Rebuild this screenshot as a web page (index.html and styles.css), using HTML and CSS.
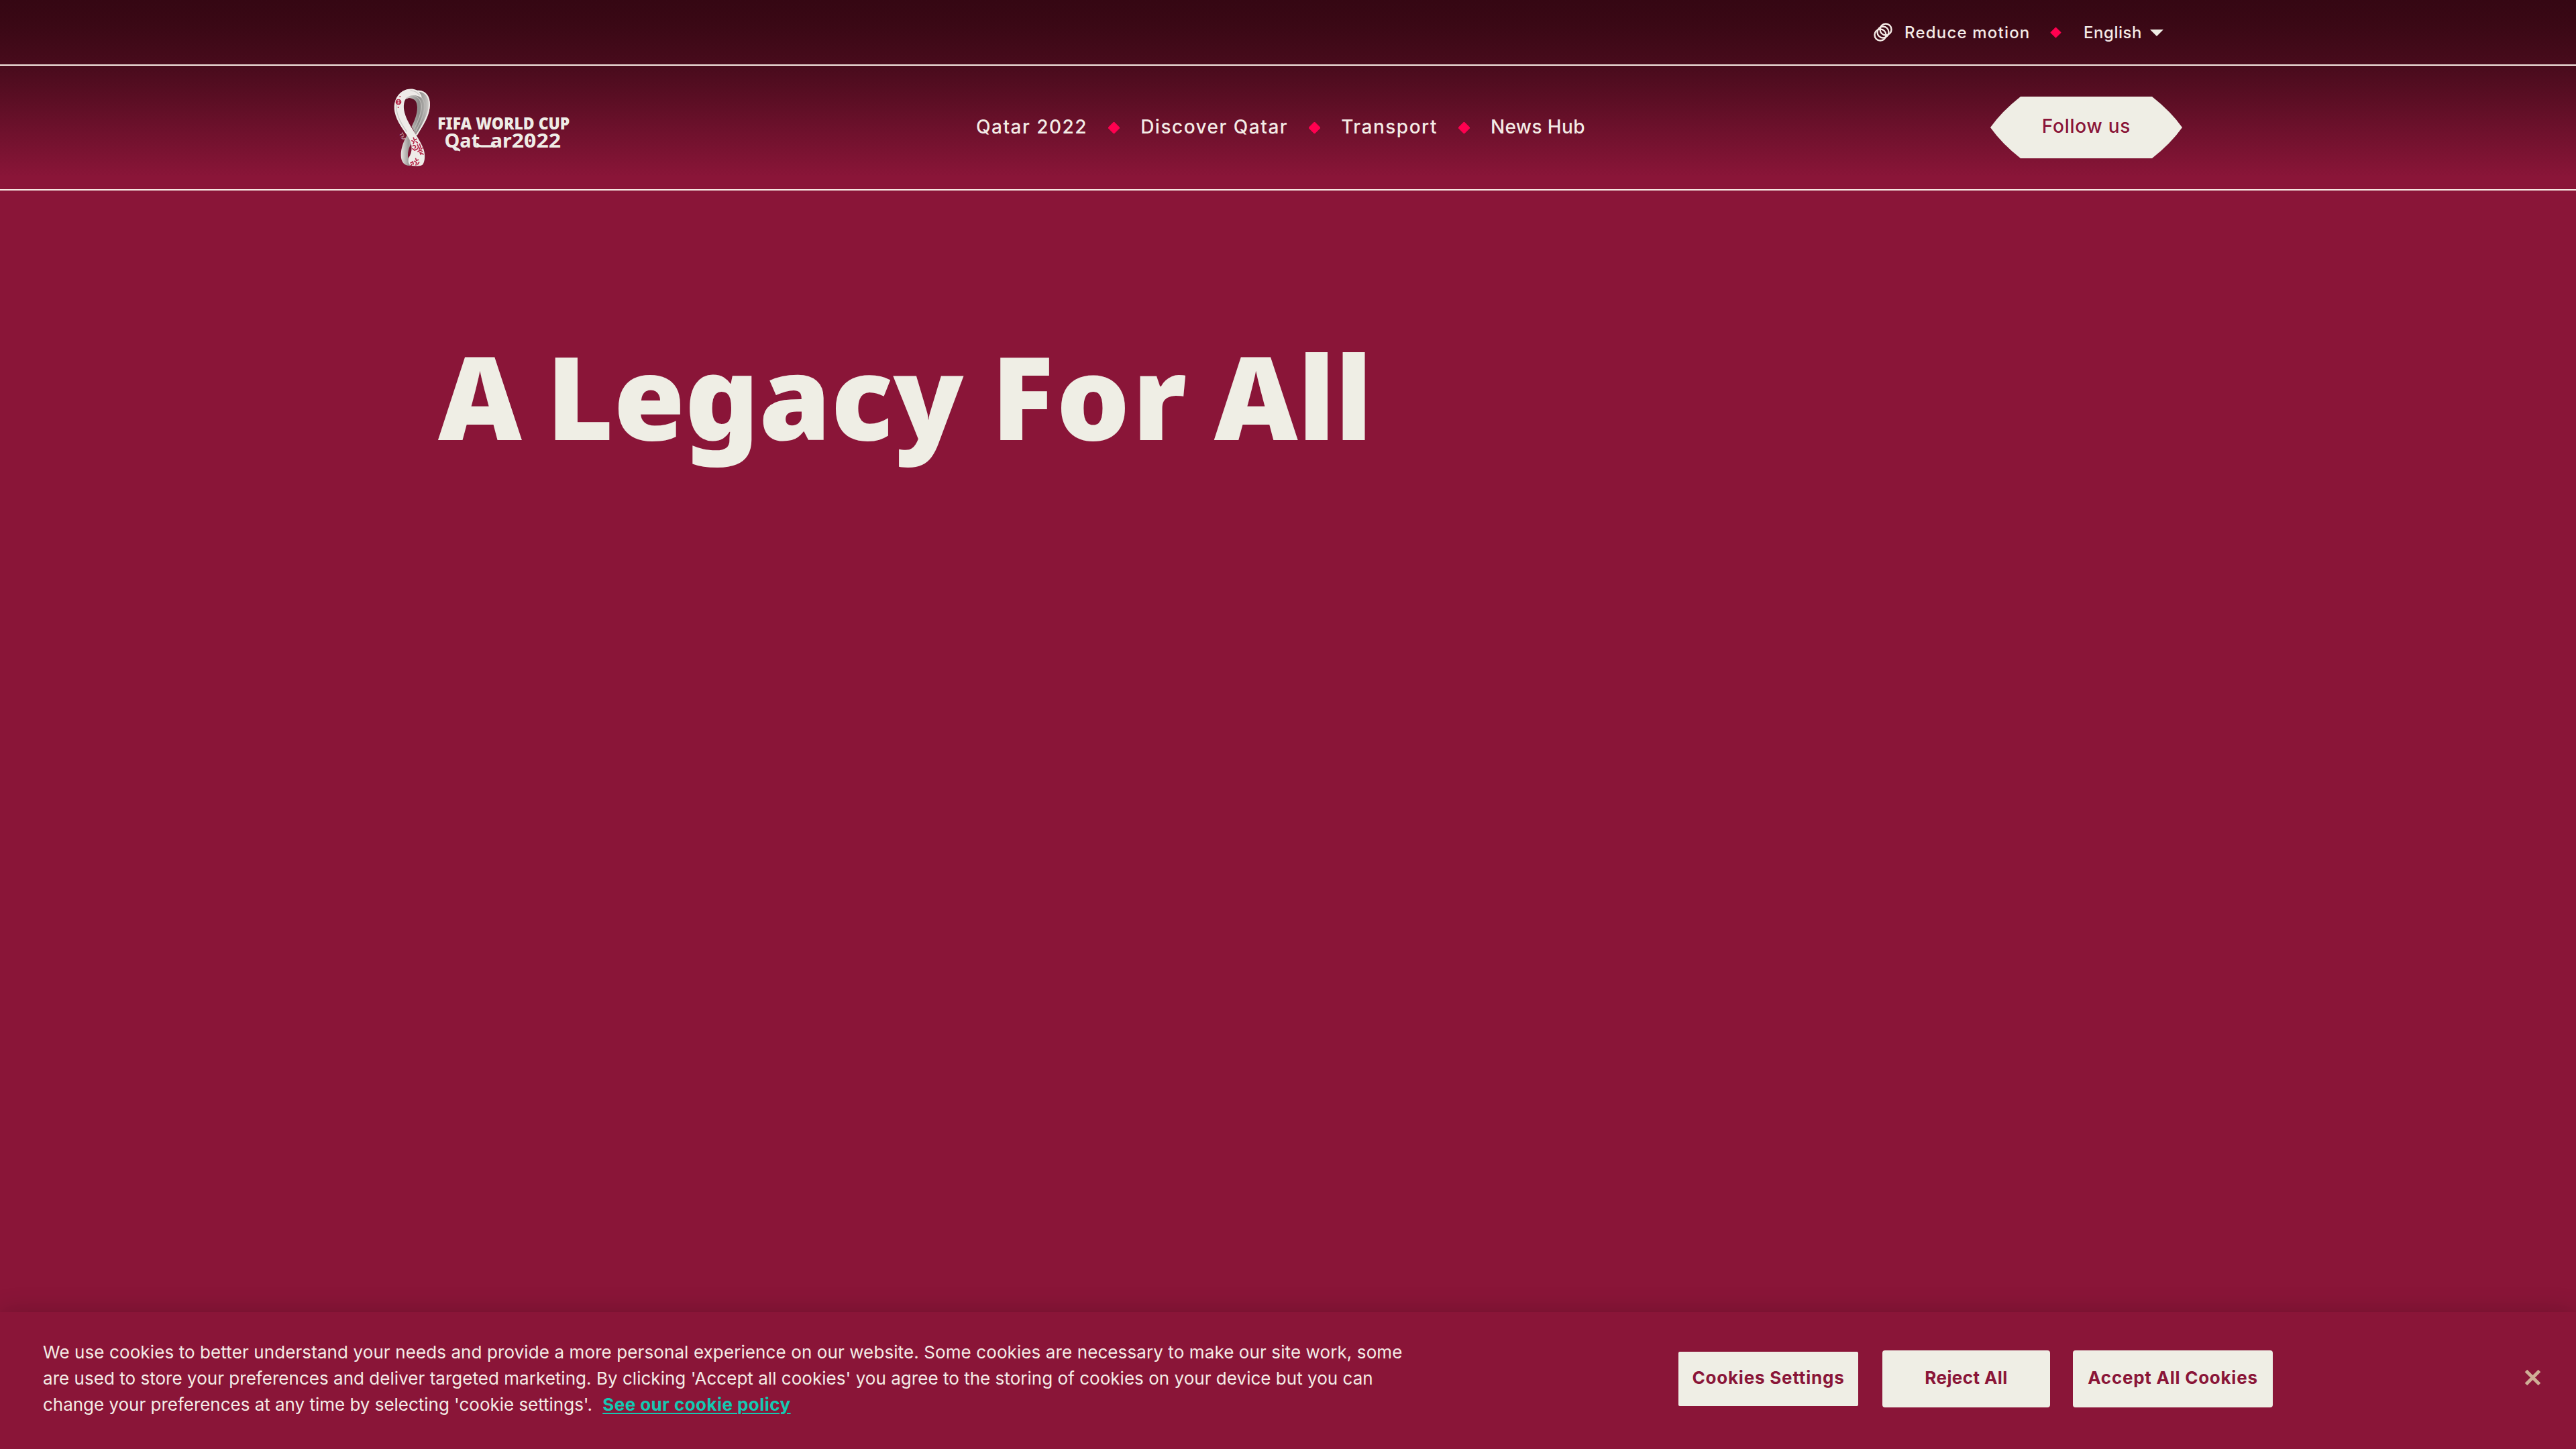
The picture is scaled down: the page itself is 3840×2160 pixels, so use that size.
FILE: index.html
```html
<!DOCTYPE html>
<html lang="en">
<head>
<meta charset="utf-8">
<title>A Legacy For All</title>
<link rel="stylesheet" href="styles.css">
</head>
<body>
<header class="header">
  <div class="topbar">
    <svg class="motion-icon" viewBox="0 0 27 27" fill="none" stroke="currentColor" stroke-width="2.3">
      <circle cx="9.6" cy="17.4" r="8.2"/><circle cx="13.5" cy="13.5" r="8.2"/><circle cx="17.4" cy="9.6" r="8.2"/>
    </svg>
    <span class="reduce">Reduce motion</span>
    <svg class="diamond" viewBox="0 0 16 16"><path d="M8 1L15 8L8 15L1 8Z"/></svg>
    <span class="language">English</span>
    <svg class="caret" viewBox="0 0 20 10"><path d="M0 0H20L10 10Z"/></svg>
  </div>
  <div class="mainbar">
    <a class="logo">
      <svg viewBox="40 60 820 360">
        <defs>
          <linearGradient id="inner" x1="0" x2="1" y1="0" y2="0"><stop offset="0" stop-color="#d8d6d2"/><stop offset=".55" stop-color="#8b8a88"/><stop offset="1" stop-color="#d3d1ce"/></linearGradient>
          <linearGradient id="lower" x1="0" x2="1" y1="0" y2="0"><stop offset="0" stop-color="#e8e5e1"/><stop offset=".6" stop-color="#9b9997"/><stop offset="1" stop-color="#d8d5d2"/></linearGradient>
        </defs>
        <path fill="url(#inner)" d="M128 82C155 64 190 72 206 102C220 132 213 175 196 208C181 238 165 259 154 278L132 236C144 212 158 180 157 149C156 124 147 111 120 108L105 114Z"/>
        <path fill="none" stroke="#bbb9b6" stroke-width="4" d="M128 97C160 96 178 120 176 152C174 187 157 219 143 247M142 90C176 93 192 120 190 151C188 186 167 226 151 256"/>
        <path fill="none" stroke="#f0ece9" stroke-width="6" d="M160 78C194 76 213 103 211 141C209 187 176 237 154 274"/>
        <path fill="url(#lower)" d="M112 274C97 298 83 335 84 366C85 394 98 411 124 411L142 401L116 374C113 358 118 330 132 309Z"/>
        <path fill="#eeebe8" d="M170 88C158 65 120 61 91 78C60 98 49 135 56 170C65 215 96 251 117 284C138 317 135 350 120 374C114 391 118 409 132 411C151 413 174 414 182 406C193 389 193 359 185 336C172 300 135 250 119 219C103 189 93 159 98 132C102 108 119 96 140 96C155 96 165 101 176 107C178 100 175 94 170 88Z"/>
        <path fill="none" stroke="#cbc8c5" stroke-width="4" d="M126 76C145 74 155 82 168 96M64 130C58 178 83 220 111 260"/>
        <g fill="#b51f40">
          <circle cx="73" cy="126" r="13"/><circle cx="80" cy="102" r="3"/><circle cx="72" cy="150" r="3"/>
        </g>
        <path fill="none" stroke="#eeebe8" stroke-width="2.500" d="M66 122L74 118L80 124M67 132L74 127L80 132M73 116V136"/>
        <g fill="none" stroke="#b8274a" stroke-width="5" stroke-linecap="round">
          <path d="M140 286L144 297L154 292M133 299L143 304L139 313M151 303L158 309M137 323C148 316 154 328 146 333M136 335L145 342L154 338M158 318L163 328L156 338M167 314L172 326L166 337M160 348L170 342L180 347M174 337L179 332M174 354L184 360M169 352L173 361M150 379L153 388L162 385M145 391L154 397L151 408M127 399L137 393L140 404M130 409L134 404M165 396L159 405"/>
        </g>
        <text class="tm" transform="translate(75 268) rotate(62)">TM</text>
        <text class="logo-text" x="248" y="249" textLength="592" lengthAdjust="spacingAndGlyphs">FIFA WORLD CUP</text>
        <text class="logo-city" y="329"><tspan x="279" textLength="158" lengthAdjust="spacingAndGlyphs">Qat</tspan><tspan x="484" textLength="96" lengthAdjust="spacingAndGlyphs">ar</tspan><tspan x="580" textLength="220" lengthAdjust="spacingAndGlyphs">2022</tspan></text>
        <path fill="none" stroke="#efece6" stroke-width="10" d="M425 310Q427 324 445 324H486Q499 324 504 315"/>
        <path fill="none" stroke="#efece6" stroke-width="9" d="M300 322Q325 326 349 344"/>
        <path fill="#efece6" d="M662 291L669 299L662 307L655 299Z"/>
      </svg>
    </a>
    <nav class="nav">
      <a>Qatar 2022</a>
      <svg class="diamond" viewBox="0 0 16 16"><path d="M8 0L16 8L8 16L0 8Z"/></svg>
      <a>Discover Qatar</a>
      <svg class="diamond" viewBox="0 0 16 16"><path d="M8 0L16 8L8 16L0 8Z"/></svg>
      <a>Transport</a>
      <svg class="diamond" viewBox="0 0 16 16"><path d="M8 0L16 8L8 16L0 8Z"/></svg>
      <a class="news">News Hub</a>
    </nav>
    <a class="follow">Follow us</a>
  </div>
</header>
<main class="hero">
  <h1>A Legacy <span class="loose">For</span> All</h1>
</main>
<section class="cookies">
  <p class="notice">
    <span class="line first">We use cookies to better understand your needs and provide a more personal experience on our website. Some cookies are necessary to make our site work, some</span>
    <span class="line">are used to store your preferences and deliver targeted marketing. By clicking 'Accept all cookies' you agree to the storing of cookies on your device but you can</span>
    <span class="line last">change your preferences at any time by selecting 'cookie settings'. <a class="policy">See our cookie policy</a></span>
  </p>
  <div class="actions">
    <button class="btn settings">Cookies Settings</button>
    <button class="btn reject">Reject All</button>
    <button class="btn accept">Accept All Cookies</button>
  </div>
  <svg class="close" viewBox="0 0 25 25"><path d="M2.500 2.500L22.500 22.500M22.500 2.500L2.500 22.500"/></svg>
</section>
</body>
</html>
```
FILE: styles.css
```css
* { box-sizing: border-box; }
body {
  margin: 0;
  height: 2160px;
  display: flex;
  flex-direction: column;
  background: #8a1538;
  color: #f4ebe6;
  font-family: Inter, "Liberation Sans", sans-serif;
  overflow: hidden;
}
.header { background: linear-gradient(#350713 0, #3a0815 36px, #480b1c 97px, #5b0e24 148px, #8a1538 264px); }
.topbar {
  height: 98px;
  border-bottom: 2px solid #f8eae4;
  display: flex;
  align-items: center;
  padding-left: 2793px;
  font-size: 24px;
  font-weight: 500;
}
.motion-icon { width: 28px; height: 28px; margin-right: 18px; }
.reduce { letter-spacing: 1.2px; width: 217px; }
.language { letter-spacing: .55px; margin-left: 33px; width: 99px; }
.diamond { width: 17px; height: 17px; fill: #ff0050; stroke: #ff0050; stroke-linejoin: round; flex: none; }
.caret { width: 20px; height: 10px; fill: #efeee5; margin-top: 1px; }
.mainbar {
  height: 186px;
  border-bottom: 2px solid #f8eae4;
  display: grid;
  grid-template-columns: 872px 1512px 286px;
  padding-left: 583px;
  align-items: center;
}
.logo svg { display: block; width: 273px; height: 120px; overflow: visible; }
.logo-text, .logo-city { font-family: "Noto Sans", sans-serif; fill: #efece6; }
.logo-text { font-size: 72px; font-weight: 900; }
.logo-city { font-size: 84px; font-weight: 700; }
.tm { font: 24px "Liberation Sans", sans-serif; fill: #c9a5ac; }
.nav {
  display: flex;
  align-items: center;
  gap: 31px;
  font-size: 28px;
  font-weight: 500;
  letter-spacing: 1.5px;
}
.nav a { padding-bottom: 3px; white-space: nowrap; }
.nav .news { letter-spacing: .4px; }
.follow {
  height: 92px;
  display: flex;
  align-items: center;
  justify-content: center;
  padding-bottom: 4px;
  background: #efeee5;
  color: #8a1538;
  font-size: 28px;
  font-weight: 500;
  letter-spacing: .75px;
  clip-path: path("M0 46Q17 22 45 0H241Q269 22 286 46Q269 70 241 92H45Q17 70 0 46Z");
}
.hero { flex: 1; padding: 219px 653px 0; }
h1 {
  margin: 0;
  color: #efeee5;
  font: 900 172px/172px "Noto Sans", sans-serif;
  word-spacing: -8px;
}
.loose { letter-spacing: 4px; margin-left: 5px; }
.cookies {
  height: 204px;
  background: #8a1538;
  box-shadow: 0 0 36px rgba(0, 0, 0, .2);
  display: flex;
  align-items: flex-start;
  padding: 40px 50px 0 64px;
}
.notice { margin: 0; width: 2438px; font-size: 26px; line-height: 39px; }
.line { display: block; white-space: nowrap; letter-spacing: .03px; }
.first { letter-spacing: .1px; }
.last { letter-spacing: -.02px; }
.policy {
  color: #14c9b2;
  font-weight: 700;
  letter-spacing: .45px;
  margin-left: 8px;
  text-decoration: underline;
  text-decoration-thickness: 2px;
  text-underline-offset: 3px;
  text-decoration-skip-ink: auto;
}
.actions { display: flex; align-items: center; margin-top: 17px; }
.btn {
  border: 0;
  border-radius: 4px;
  padding: 0 0 4px;
  height: 85px;
  background: #efeee5;
  color: #8a1538;
  font: 700 26px Inter, "Liberation Sans", sans-serif;
}
.settings { width: 268px; height: 81px; letter-spacing: .8px; border-radius: 2px; margin-right: 36px; }
.reject { width: 250px; letter-spacing: .4px; margin-right: 34px; }
.accept { width: 298px; letter-spacing: .75px; }
.close { width: 25px; height: 25px; margin: 45px 2px 0 auto; overflow: visible; fill: none; stroke: #cfae96; stroke-width: 5; }
```
